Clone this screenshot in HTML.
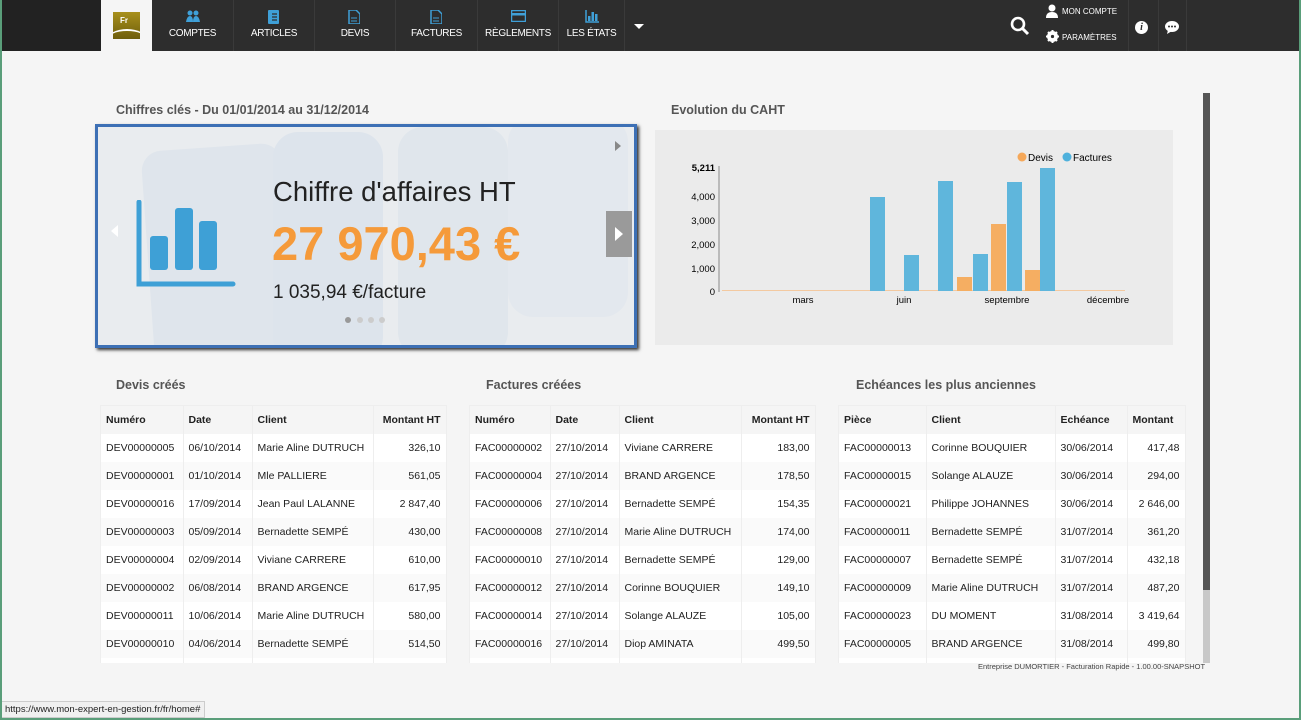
<!DOCTYPE html>
<html><head><meta charset="utf-8"><style>
*{margin:0;padding:0;box-sizing:border-box}
body{width:1301px;height:720px;overflow:hidden;background:#f5f5f5;font-family:"Liberation Sans",sans-serif;position:relative;color:#222}
.frame{position:absolute;left:0;top:0;width:1301px;height:720px;border:2px solid #5a9e7a;border-top:none;pointer-events:none}
nav{position:absolute;left:0;top:0;width:1301px;height:51px;background:#2d2d2d}
.blk{position:absolute;left:0;top:0;width:101px;height:51px;background:#222}
.logo{position:absolute;left:101px;top:0;width:51px;height:53px;background:#f5f5f5}
.logo div{position:absolute;left:12px;top:12px;width:27px;height:27px;background:linear-gradient(#a8901c,#6e5e0c);color:#fff;font-size:8px;font-weight:bold;padding:4px 0 0 7px;overflow:hidden}
.logo div:after{content:"";position:absolute;left:-6px;top:17px;width:40px;height:20px;border-top:2px solid #fff;border-radius:50%}
.item{position:absolute;top:0;height:51px;border-right:1px solid #3a3a3a;color:#fff;font-size:10px;text-align:center;padding-top:28px;letter-spacing:-0.3px}
.item svg{position:absolute;top:10px;left:50%;margin-left:-7px}
.sec{position:absolute;font-size:12.5px;font-weight:bold;color:#555}
table{position:absolute;border-collapse:collapse;font-size:10.5px;table-layout:fixed;background:#fff}
td,th{height:28px;padding:0 5px;border-right:1px solid #eee;white-space:nowrap;overflow:hidden;text-align:left}
th{font-weight:bold;background:#f5f5f5;color:#222}
tr:nth-child(odd) td{background:#fafafa}
.r{text-align:right}
.clip{position:absolute;overflow:hidden;border:1px solid #eee;border-bottom:none}
</style></head><body>
<nav>
<div class="blk"></div>
<div class="logo"><div>Fr</div></div>
<div class="item" style="left:152px;width:82px"><svg width="14" height="12" viewBox="0 0 14 12"><circle cx="4" cy="3" r="2.5" fill="#3fa0d8"/><circle cx="10" cy="3" r="2.5" fill="#3fa0d8"/><path d="M0 12 Q1 6 4 6 Q7 6 7 12ZM7 12 Q7 6 10 6 Q13 6 14 12Z" fill="#3fa0d8"/></svg>COMPTES</div>
<div class="item" style="left:234px;width:81px"><svg width="12" height="14" viewBox="0 0 12 14"><rect x="1" y="0" width="11" height="14" rx="1" fill="#3fa0d8"/><path d="M5 4h5M5 7h5M5 10h5" stroke="#2d2d2d" stroke-width="1.2"/></svg>ARTICLES</div>
<div class="item" style="left:315px;width:81px"><svg width="12" height="14" viewBox="0 0 12 14"><path d="M1 0h7l4 4v10H1z" fill="none" stroke="#3fa0d8" stroke-width="1.5"/><path d="M3 8h6M3 11h6" stroke="#3fa0d8"/></svg>DEVIS</div>
<div class="item" style="left:396px;width:82px"><svg width="12" height="14" viewBox="0 0 12 14"><path d="M1 0h7l4 4v10H1z" fill="none" stroke="#3fa0d8" stroke-width="1.5"/><path d="M3 8h6M3 11h6" stroke="#3fa0d8"/></svg>FACTURES</div>
<div class="item" style="left:478px;width:81px"><svg width="15" height="12" viewBox="0 0 15 12"><rect x="0.5" y="0.5" width="14" height="11" rx="1" fill="none" stroke="#3fa0d8" stroke-width="1.5"/><rect x="0" y="3" width="15" height="2.5" fill="#3fa0d8"/></svg>RÈGLEMENTS</div>
<div class="item" style="left:559px;width:66px"><svg width="14" height="13" viewBox="0 0 14 13"><path d="M1 0v12h13" stroke="#3fa0d8" stroke-width="1.5" fill="none"/><rect x="3" y="6" width="2.5" height="5" fill="#3fa0d8"/><rect x="6.5" y="2" width="2.5" height="9" fill="#3fa0d8"/><rect x="10" y="4" width="2.5" height="7" fill="#3fa0d8"/></svg>LES ÉTATS</div>
<div style="position:absolute;left:634px;top:24px;border:5px solid transparent;border-top:5px solid #fff"></div>
<svg style="position:absolute;left:1010px;top:16px" width="20" height="20" viewBox="0 0 20 20"><circle cx="8" cy="8" r="6" fill="none" stroke="#fff" stroke-width="2.6"/><path d="M12.5 12.5L18 18" stroke="#fff" stroke-width="3"/></svg>
<svg style="position:absolute;left:1046px;top:4px" width="12" height="14" viewBox="0 0 12 14"><circle cx="6" cy="4" r="3.5" fill="#fff"/><path d="M0 14Q0 8 6 8Q12 8 12 14Z" fill="#fff"/></svg>
<div style="position:absolute;left:1062px;top:7px;color:#fff;font-size:8px">MON COMPTE</div>
<svg style="position:absolute;left:1046px;top:30px" width="13" height="13" viewBox="0 0 13 13"><circle cx="6.5" cy="6.5" r="4" fill="none" stroke="#fff" stroke-width="3"/><path d="M6.5 0v13M0 6.5h13M2 2l9 9M11 2l-9 9" stroke="#fff" stroke-width="2"/><circle cx="6.5" cy="6.5" r="1.6" fill="#2d2d2d"/></svg>
<div style="position:absolute;left:1062px;top:33px;color:#fff;font-size:8px">PARAMÈTRES</div>
<div style="position:absolute;left:1128px;top:0;width:1px;height:51px;background:#3a3a3a"></div>
<div style="position:absolute;left:1158px;top:0;width:1px;height:51px;background:#3a3a3a"></div>
<div style="position:absolute;left:1186px;top:0;width:1px;height:51px;background:#3a3a3a"></div>
<div style="position:absolute;left:1135px;top:21px;width:13px;height:13px;border-radius:50%;background:#fff;color:#2d2d2d;font-size:10px;font-weight:bold;text-align:center;line-height:13px;font-family:'Liberation Serif',serif;font-style:italic">i</div>
<svg style="position:absolute;left:1165px;top:21px" width="14" height="13" viewBox="0 0 14 13"><ellipse cx="7" cy="5.5" rx="7" ry="5.5" fill="#fff"/><path d="M3 9L2 13L7 10Z" fill="#fff"/><circle cx="4" cy="5.5" r="1" fill="#2d2d2d"/><circle cx="7" cy="5.5" r="1" fill="#2d2d2d"/><circle cx="10" cy="5.5" r="1" fill="#2d2d2d"/></svg>
</nav>

<div class="sec" style="left:116px;top:103px">Chiffres clés - Du 01/01/2014 au 31/12/2014</div>
<div class="sec" style="left:671px;top:103px">Evolution du CAHT</div>

<div style="position:absolute;left:95px;top:124px;width:542px;height:224px;border:3px solid #3d70b5;box-shadow:2px 2px 3px #333;background:#e9ecef;overflow:hidden">
<div style="position:absolute;left:50px;top:20px;width:140px;height:220px;background:#dfe5ec;border-radius:20px;transform:rotate(-4deg)"></div>
<div style="position:absolute;left:175px;top:5px;width:110px;height:230px;background:#dde4ec;border-radius:25px"></div>
<div style="position:absolute;left:300px;top:0;width:110px;height:230px;background:#e0e6ec;border-radius:25px"></div>
<div style="position:absolute;left:410px;top:-10px;width:120px;height:200px;background:#e3e8ee;border-radius:25px"></div>
<svg style="position:absolute;left:38px;top:73px" width="100" height="90" viewBox="0 0 100 90"><path d="M3 2V84H97" fill="none" stroke="#3ea0d6" stroke-width="5" stroke-linecap="round"/><rect x="14" y="36" width="18" height="34" rx="3" fill="#3ea0d6"/><rect x="39" y="8" width="18" height="62" rx="3" fill="#3ea0d6"/><rect x="63" y="21" width="18" height="49" rx="3" fill="#3ea0d6"/></svg>
<div style="position:absolute;left:175px;top:49px;font-size:27.5px;color:#222">Chiffre d'affaires HT</div>
<div style="position:absolute;left:174px;top:89px;font-size:47px;color:#f59a3a;font-weight:bold">27 970,43 €</div>
<div style="position:absolute;left:175px;top:155px;font-size:19px;color:#222">1 035,94 €/facture</div>
<div style="position:absolute;left:247px;top:190px;width:6px;height:6px;border-radius:50%;background:#999"></div>
<div style="position:absolute;left:259px;top:190px;width:6px;height:6px;border-radius:50%;background:#ccc"></div>
<div style="position:absolute;left:270px;top:190px;width:6px;height:6px;border-radius:50%;background:#ccc"></div>
<div style="position:absolute;left:281px;top:190px;width:6px;height:6px;border-radius:50%;background:#ccc"></div>
<div style="position:absolute;left:13px;top:98px;border:6px solid transparent;border-right:7px solid #fff;border-left:none"></div>
<div style="position:absolute;left:517px;top:14px;border:5px solid transparent;border-left:6px solid #888;border-right:none"></div>
<div style="position:absolute;left:508px;top:84px;width:26px;height:46px;background:#9a9a9a"></div>
<div style="position:absolute;left:517px;top:100px;border:7px solid transparent;border-left:8px solid #fff;border-right:none"></div>
</div>

<div style="position:absolute;left:655px;top:130px;width:518px;height:215px;background:#ebebeb"></div>
<svg style="position:absolute;left:0;top:0" width="1301" height="720" font-family="Liberation Sans, sans-serif" font-size="10">
<circle cx="1022" cy="157" r="4.5" fill="#f5a85a"/><text x="1028" y="161">Devis</text>
<circle cx="1067" cy="157" r="4.5" fill="#4fb1dc"/><text x="1073" y="161">Factures</text>
<line x1="719" y1="166" x2="719" y2="292" stroke="#888"/>
<g text-anchor="end" font-size="9.5"><text x="715" y="171" font-weight="bold">5,211</text><text x="715" y="200">4,000</text><text x="715" y="224">3,000</text><text x="715" y="248">2,000</text><text x="715" y="272">1,000</text><text x="715" y="295">0</text></g>
<g fill="#f3c9a0"><rect x="722" y="290" width="403" height="1"/></g>
<g fill="#5fb6dc">
<rect x="870" y="197" width="15" height="94"/>
<rect x="904" y="255" width="15" height="36"/>
<rect x="938" y="181" width="15" height="110"/>
<rect x="973" y="254" width="15" height="37"/>
<rect x="1007" y="182" width="15" height="109"/>
<rect x="1040" y="168" width="15" height="123"/>
</g>
<g fill="#f5ae62">
<rect x="957" y="277" width="15" height="14"/>
<rect x="991" y="224" width="15" height="67"/>
<rect x="1025" y="270" width="15" height="21"/>
</g>
<g text-anchor="middle" font-size="9.5"><text x="803" y="303">mars</text><text x="904" y="303">juin</text><text x="1007" y="303">septembre</text><text x="1108" y="303">décembre</text></g>
</svg>

<div class="sec" style="left:116px;top:378px">Devis créés</div>
<div class="sec" style="left:486px;top:378px">Factures créées</div>
<div class="sec" style="left:856px;top:378px">Echéances les plus anciennes</div>

<div class="clip" style="left:100px;top:405px;width:347px;height:258px">
<table style="width:345px"><colgroup><col style="width:82px"><col style="width:69px"><col style="width:121px"><col style="width:73px"></colgroup>
<tr><th>Numéro</th><th>Date</th><th>Client</th><th class="r">Montant HT</th></tr>
<tr><td>DEV00000005</td><td>06/10/2014</td><td>Marie Aline DUTRUCH</td><td class="r">326,10</td></tr>
<tr><td>DEV00000001</td><td>01/10/2014</td><td>Mle PALLIERE</td><td class="r">561,05</td></tr>
<tr><td>DEV00000016</td><td>17/09/2014</td><td>Jean Paul LALANNE</td><td class="r">2 847,40</td></tr>
<tr><td>DEV00000003</td><td>05/09/2014</td><td>Bernadette SEMPÉ</td><td class="r">430,00</td></tr>
<tr><td>DEV00000004</td><td>02/09/2014</td><td>Viviane CARRERE</td><td class="r">610,00</td></tr>
<tr><td>DEV00000002</td><td>06/08/2014</td><td>BRAND ARGENCE</td><td class="r">617,95</td></tr>
<tr><td>DEV00000011</td><td>10/06/2014</td><td>Marie Aline DUTRUCH</td><td class="r">580,00</td></tr>
<tr><td>DEV00000010</td><td>04/06/2014</td><td>Bernadette SEMPÉ</td><td class="r">514,50</td></tr>
<tr><td>&nbsp;</td><td></td><td></td><td></td></tr>
</table></div>

<div class="clip" style="left:469px;top:405px;width:347px;height:258px">
<table style="width:345px"><colgroup><col style="width:80px"><col style="width:69px"><col style="width:122px"><col style="width:74px"></colgroup>
<tr><th>Numéro</th><th>Date</th><th>Client</th><th class="r">Montant HT</th></tr>
<tr><td>FAC00000002</td><td>27/10/2014</td><td>Viviane CARRERE</td><td class="r">183,00</td></tr>
<tr><td>FAC00000004</td><td>27/10/2014</td><td>BRAND ARGENCE</td><td class="r">178,50</td></tr>
<tr><td>FAC00000006</td><td>27/10/2014</td><td>Bernadette SEMPÉ</td><td class="r">154,35</td></tr>
<tr><td>FAC00000008</td><td>27/10/2014</td><td>Marie Aline DUTRUCH</td><td class="r">174,00</td></tr>
<tr><td>FAC00000010</td><td>27/10/2014</td><td>Bernadette SEMPÉ</td><td class="r">129,00</td></tr>
<tr><td>FAC00000012</td><td>27/10/2014</td><td>Corinne BOUQUIER</td><td class="r">149,10</td></tr>
<tr><td>FAC00000014</td><td>27/10/2014</td><td>Solange ALAUZE</td><td class="r">105,00</td></tr>
<tr><td>FAC00000016</td><td>27/10/2014</td><td>Diop AMINATA</td><td class="r">499,50</td></tr>
<tr><td>&nbsp;</td><td></td><td></td><td></td></tr>
</table></div>

<div class="clip" style="left:838px;top:405px;width:348px;height:258px">
<table style="width:346px"><colgroup><col style="width:87px"><col style="width:129px"><col style="width:72px"><col style="width:58px"></colgroup>
<tr><th>Pièce</th><th>Client</th><th>Echéance</th><th>Montant</th></tr>
<tr><td>FAC00000013</td><td>Corinne BOUQUIER</td><td>30/06/2014</td><td class="r">417,48</td></tr>
<tr><td>FAC00000015</td><td>Solange ALAUZE</td><td>30/06/2014</td><td class="r">294,00</td></tr>
<tr><td>FAC00000021</td><td>Philippe JOHANNES</td><td>30/06/2014</td><td class="r">2 646,00</td></tr>
<tr><td>FAC00000011</td><td>Bernadette SEMPÉ</td><td>31/07/2014</td><td class="r">361,20</td></tr>
<tr><td>FAC00000007</td><td>Bernadette SEMPÉ</td><td>31/07/2014</td><td class="r">432,18</td></tr>
<tr><td>FAC00000009</td><td>Marie Aline DUTRUCH</td><td>31/07/2014</td><td class="r">487,20</td></tr>
<tr><td>FAC00000023</td><td>DU MOMENT</td><td>31/08/2014</td><td class="r">3 419,64</td></tr>
<tr><td>FAC00000005</td><td>BRAND ARGENCE</td><td>31/08/2014</td><td class="r">499,80</td></tr>
<tr><td>&nbsp;</td><td></td><td></td><td></td></tr>
</table></div>

<div style="position:absolute;left:1203px;top:93px;width:7px;height:570px;background:#c8c8c8"></div>
<div style="position:absolute;left:1203px;top:93px;width:7px;height:497px;background:#555"></div>
<div style="position:absolute;left:978px;top:662px;font-size:7.5px;color:#444">Entreprise DUMORTIER - Facturation Rapide - 1.00.00-SNAPSHOT</div>
<div style="position:absolute;left:0;top:701px;height:17px;padding:2px 4px;background:#f0f0f0;border:1px solid #ccc;font-size:9.5px;color:#222">https://www.mon-expert-en-gestion.fr/fr/home#</div>
<div class="frame"></div>
</body></html>
